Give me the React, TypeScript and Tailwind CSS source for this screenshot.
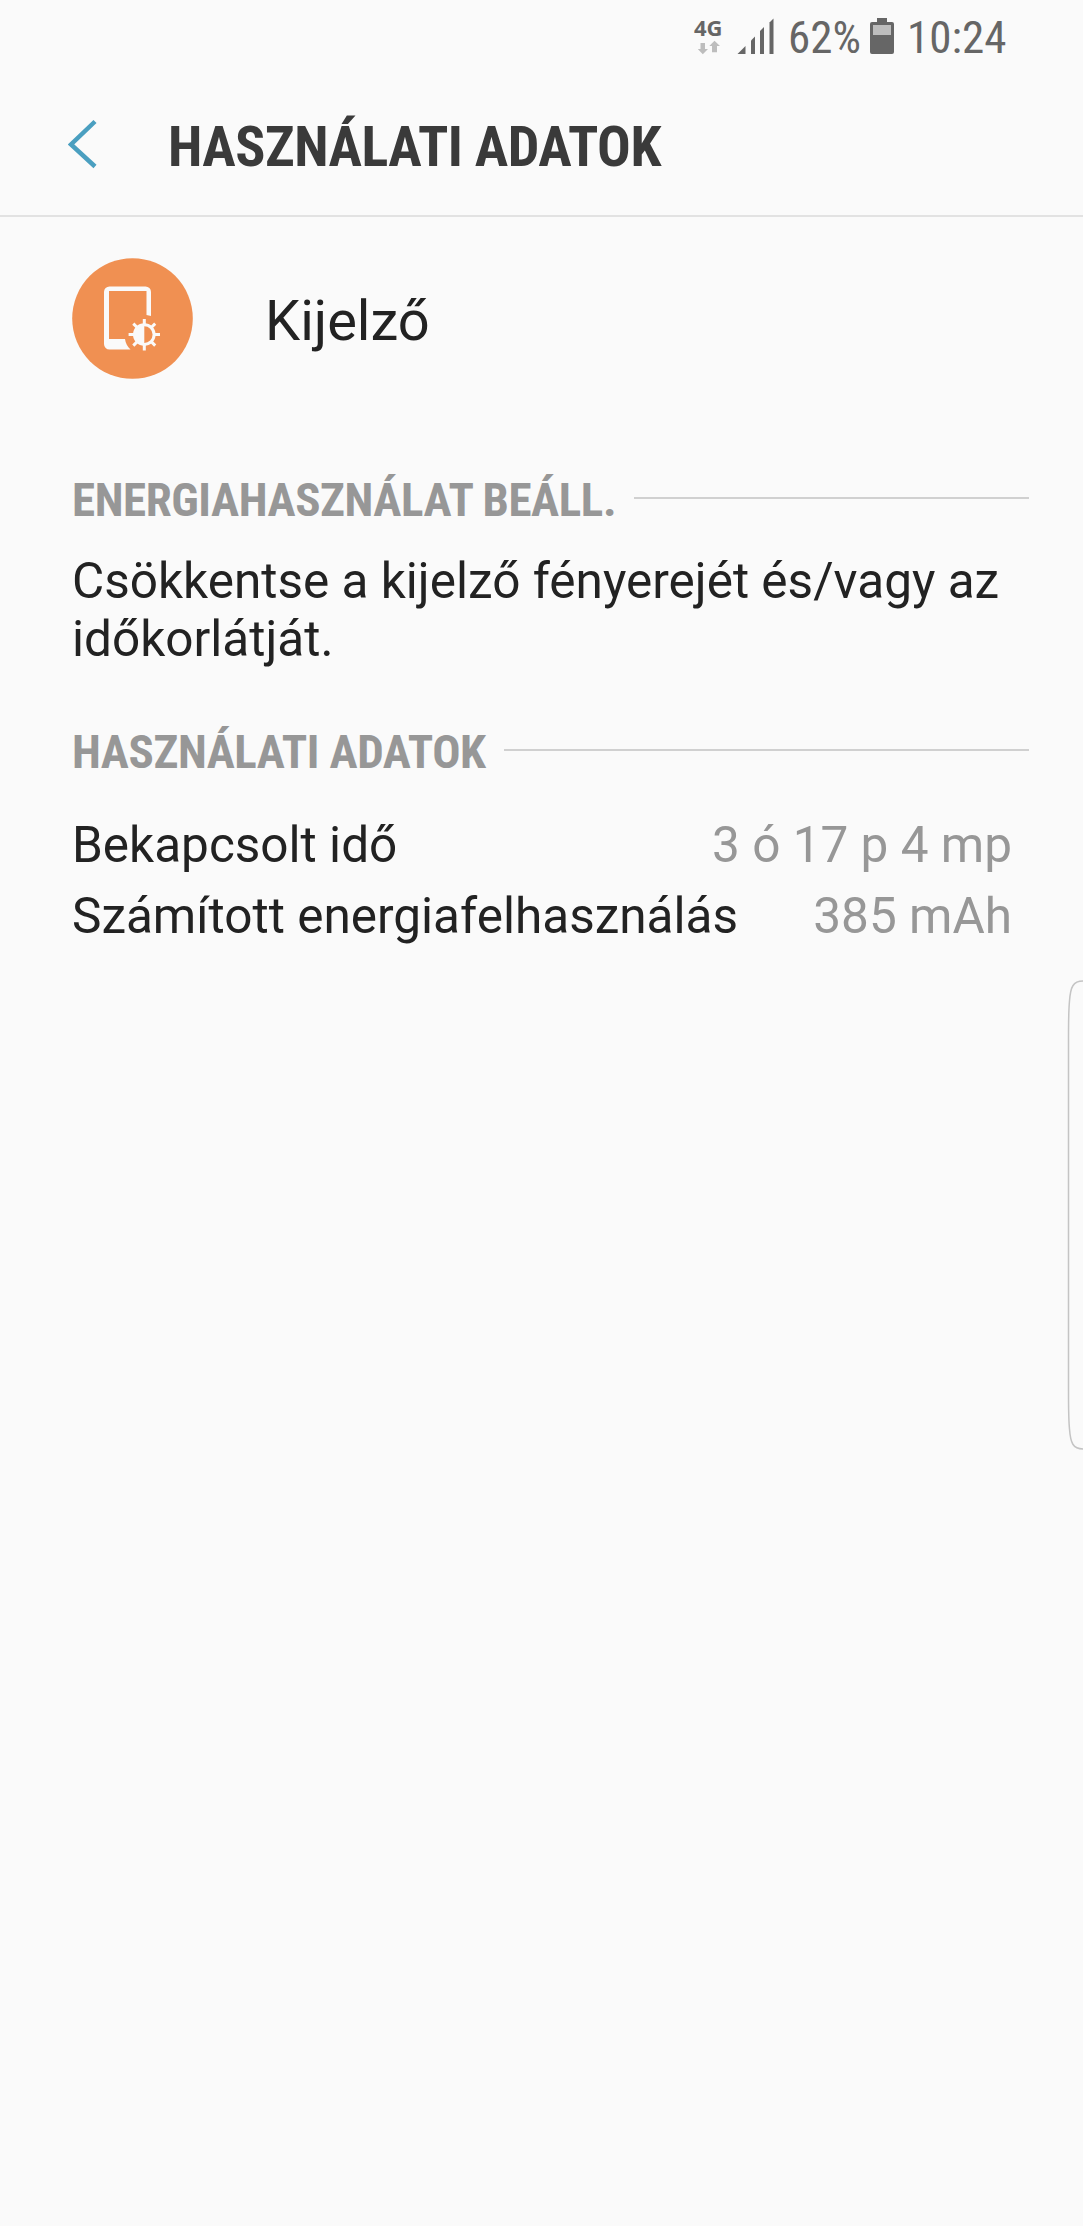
import React from "react";

const SectionTitle = ({ children }: { children: React.ReactNode }) => (
  <div className="flex h-14 items-center">
    <h2 className="font-['Roboto_Condensed','Roboto'] text-[47px] leading-14 font-bold tracking-[-0.42px] whitespace-nowrap text-[#979797] [font-stretch:75%]">
      {children}
    </h2>
    <div className="mb-[5px] ml-[18px] h-[2px] flex-1 bg-[#d0d0d0]" />
  </div>
);

const UsageRow = ({ label, value }: { label: string; value: string }) => (
  <div className="flex h-[70px] items-center justify-between pr-[17px] text-[49.5px] leading-[70px] whitespace-nowrap">
    <span>{label}</span>
    <span className="text-[#979797]">{value}</span>
  </div>
);

const StatusBar = () => (
  <div className="flex h-[76px] pl-[694px] font-['Roboto_Condensed','Roboto'] text-[45px] leading-[76px] whitespace-nowrap text-[#666666] [font-stretch:75%]">
    <div className="w-[30px] pt-4">
      <div className="font-['Open_Sans'] text-[22px] leading-[22px] font-bold [font-stretch:100%]">4G</div>
      <svg width="24" height="16" viewBox="0 0 24 16" className="mt-0.5 ml-1" fill="#bdbdbd">
        <path d="M2.500 3h4.500v6h3l-5.200 5.300L-.2 9h2.700z" />
        <path d="M14 12.300h5V6h3L16.500.7 11.300 6H14z" />
      </svg>
    </div>
    <svg width="38" height="38" viewBox="0 0 38 38" className="mt-[17px] ml-[13px]" fill="#666666">
      <path d="M.5 37l8-8v8z" />
      <path d="M14 23.500l4-4V37h-4z" />
      <path d="M23 14l4-4v27h-4z" />
      <path d="M32.500 5.500l4-4V37h-4z" />
    </svg>
    <span className="ml-[13px] w-[72px]">62%</span>
    <svg width="24" height="36" viewBox="0 0 24 36" className="mt-[18px] ml-[10px]">
      <path fill="#666666" d="M7 0h10v4h5a2 2 0 0 1 2 2v28a2 2 0 0 1-2 2H2a2 2 0 0 1-2-2V6a2 2 0 0 1 2-2h5z" />
      <path fill="#bdbdbd" d="M3 7h18v10H3z" />
    </svg>
    <span className="ml-[13px]">10:24</span>
  </div>
);

const DisplayIcon = () => (
  <svg width="121" height="121" viewBox="0 0 121 121">
    <circle cx="60.500" cy="60.500" r="60.300" fill="#f09052" />
    <g fill="#fafafa">
      <path d="M37.500 28.500h36a5.500 5.500 0 0 1 5.500 5.500v24l-4.500-1V33H37v48h16c.5 4 2.500 7.500 5.500 10.500h-21a5.500 5.500 0 0 1-5.500-5.500V34a5.500 5.500 0 0 1 5.500-5.500z" />
      <path fillRule="evenodd" d="M72.300 65.300a11.300 11.300 0 1 1 0 22.600 11.300 11.300 0 0 1 0-22.600zM72.300 68.300v16.600a8.300 8.300 0 0 0 0-16.600z" />
    </g>
    <g stroke="#fafafa" strokeWidth="3">
      <path d="M72.300 61v6M72.300 86.500v6M56.600 76.600h6M82 76.600h6" />
      <path d="M61.300 65.600l4.200 4.200M79 83.400l4.200 4.200M83.200 65.600l-4.200 4.200M65.500 83.400l-4.200 4.200" />
    </g>
  </svg>
);

const App = () => {
  return (
    <div className="relative min-h-[2226px] overflow-hidden bg-[#fafafa] font-['Roboto',sans-serif] text-[#222222]">
      <StatusBar />

      <header className="flex h-[141px] border-b-2 border-[#e2e2e2] pl-[68px]">
        <svg width="30" height="50" viewBox="0 0 30 50" className="mt-[43px]" fill="none">
          <path d="M27 2.500L3 25.500l24 22" stroke="#4a9fc0" strokeWidth="4.500" />
        </svg>
        <h1 className="mt-[35px] ml-[70px] font-['Roboto_Condensed','Roboto'] text-[56px] leading-[72px] font-bold tracking-[-0.5px] whitespace-nowrap text-[#3a3a3a] [font-stretch:75%]">
          HASZNÁLATI ADATOK
        </h1>
      </header>

      <main className="pr-[54px] pl-[72px]">
        <div className="flex pt-[41px]">
          <DisplayIcon />
          <span className="mt-[27px] ml-[72px] text-[56px] leading-[72px]">Kijelző</span>
        </div>

        <section className="mt-[93px]">
          <SectionTitle>ENERGIAHASZNÁLAT BEÁLL.</SectionTitle>
          <p className="mt-6 text-[49.5px] leading-[58px]">
            Csökkentse a kijelző fényerejét és/vagy az
            <br />
            időkorlátját.
          </p>
        </section>

        <section className="mt-14">
          <SectionTitle>HASZNÁLATI ADATOK</SectionTitle>
          <div className="mt-[30px] flex flex-col gap-px">
            <UsageRow label="Bekapcsolt idő" value="3 ó 17 p 4 mp" />
            <UsageRow label="Számított energiafelhasználás" value="385 mAh" />
          </div>
        </section>
      </main>

      {/* edge panel handle */}
      <svg width="16" height="472" viewBox="0 0 16 472" className="absolute top-[979px] right-0" fill="none">
        <path d="M16 2C6 2 3.500 8 2.500 22Q1.500 32 1.500 60v352q0 28 1 38C3.500 464 6 470 16 470" stroke="#c4c4c4" strokeWidth="1.500" />
      </svg>
    </div>
  );
};

export default App;
